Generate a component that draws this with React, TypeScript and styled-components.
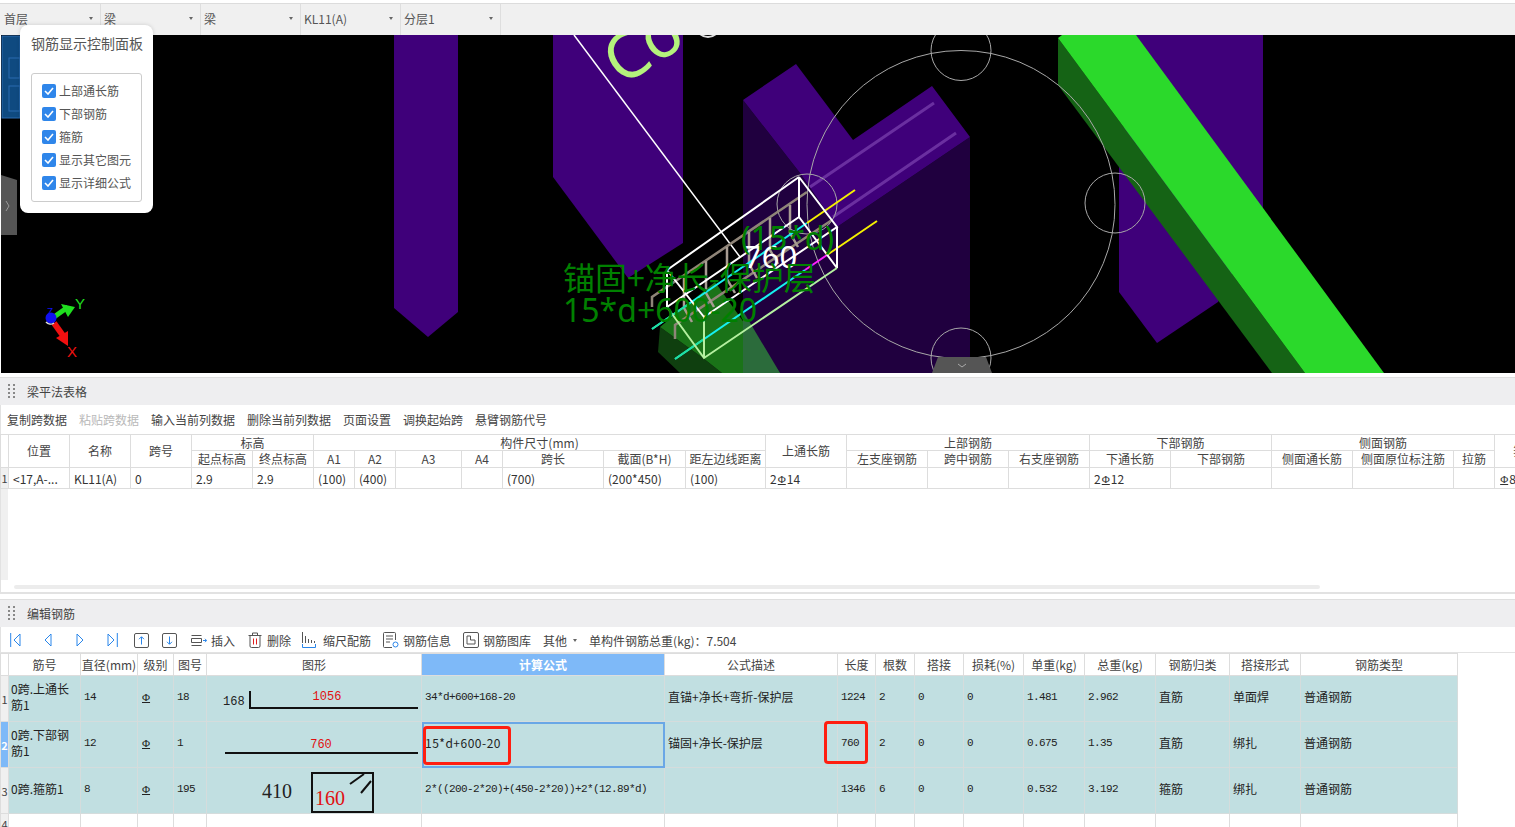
import React from 'react';
import styled, { createGlobalStyle } from 'styled-components';

const Global = createGlobalStyle`
  html, body { margin: 0; padding: 0; background: #fff; overflow: hidden; }
  body { font-family: "Noto Sans CJK SC", "Liberation Sans", sans-serif; font-size: 12px; color: #333; }
  * { box-sizing: border-box; }
`;

const Page = styled.div`
  width: 1515px; height: 827px; overflow: hidden; display: flex; flex-direction: column; background: #fff;
`;
const SelectBar = styled.div`
  margin-top: 3px; height: 32px; flex: none; display: flex; background: #f0f0f0; border-top: 1px solid #dcdcdc; padding-left: 1px;
`;
const SelectBox = styled.div`
  width: 100px; display: flex; align-items: center; justify-content: space-between; padding: 0 7px 2px 3px;
  border-right: 1px solid #dedede; color: #555; font-size: 12px;
`;
const Caret = styled.span`
  width: 0; height: 0; border-left: 2.5px solid transparent; border-right: 2.5px solid transparent; border-top: 3px solid #666;
`;
const Viewport = styled.div`
  position: relative; height: 338px; flex: none; background: #000; margin-left: 1px;
  & > svg { display: block; }
`;
const ControlPanel = styled.div`
  position: absolute; left: 19px; top: -10px; width: 133px; height: 188px; background: #fff; border-radius: 8px; padding: 8px 11px;
  display: flex; flex-direction: column; gap: 20px; box-shadow: 0 0 4px rgba(0,0,0,.15);
`;
const PanelTitle = styled.div`
  font-size: 14px; line-height: 20px; color: #555; white-space: nowrap;
`;
const CheckGroup = styled.div`
  width: 111px; height: 129px; border: 1px solid #ccc; border-radius: 3px; padding: 7px 0 0 10px; display: flex; flex-direction: column; gap: 3px;
`;
const CheckRow = styled.div`
  display: flex; align-items: center; height: 20px; color: #555; font-size: 12px; white-space: nowrap; gap: 3px;
`;
const CheckLabel = styled.span`
  margin-top: -2px;
`;
const CheckMark = styled.span`
  width: 14px; height: 14px; border-radius: 2px; background: #2f86ea; display: flex; align-items: center; justify-content: center; flex: none;
`;
const Gap = styled.div<{ $h: number }>`
  height: ${p => p.$h}px; flex: none;
`;
const Section = styled.section<{ $h: number }>`
  height: ${p => p.$h}px; flex: none; display: flex; flex-direction: column; overflow: hidden; position: relative;
  box-shadow: inset 1px 0 0 #e2e2e2;
`;
const SectionHead = styled.div`
  height: 28px; flex: none; background: #eeeef0; border-top: 1px solid #dfdfdf; display: flex; align-items: center; padding-left: 8px; gap: 12px; font-size: 12px; color: #444;
`;
const Grip = styled.span`
  width: 7px; height: 15px; flex: none;
  background-image: radial-gradient(circle at 1px 1px, #888 1px, transparent 1.2px);
  background-size: 5px 4px;
`;
const TextBar = styled.div`
  height: 29px; flex: none; display: flex; align-items: center; gap: 12px; padding: 0 0 1px 7px; font-size: 12px; color: #444; white-space: nowrap;
`;
const TextAction = styled.span<{ $off?: boolean }>`
  color: ${p => (p.$off ? '#b9b9b9' : '#444')};
`;
const IconBar = styled.div`
  height: 26px; flex: none; display: flex; align-items: center; padding: 1px 0 0 10px; font-size: 12px; color: #444; white-space: nowrap; border-bottom: 1px solid #e2e2e2;
`;
const NavBtn = styled.span<{ $w: number }>`
  width: ${p => p.$w}px; flex: none; display: flex; align-items: center;
`;
const ToolBtn = styled.span<{ $gap: number; $next: number }>`
  display: flex; align-items: center; gap: ${p => p.$gap}px; margin-right: ${p => p.$next}px; flex: none;
`;
const Sheet = styled.table<{ $w: number }>`
  width: ${p => p.$w}px; table-layout: fixed; border-collapse: collapse; flex: none; font-size: 12px; color: #444;
`;
const Col = styled.col<{ $w: number }>`
  width: ${p => p.$w}px;
`;
const Row = styled.tr<{ $h: number }>`
  height: ${p => p.$h}px;
`;
const Head = styled.th<{ $active?: boolean }>`
  font-weight: ${p => (p.$active ? 700 : 400)}; padding: 0; border: 1px solid #dddddd; text-align: center; white-space: nowrap; overflow: hidden; line-height: 14px;
  background: ${p => (p.$active ? '#7eb9f8' : '#fff')}; color: ${p => (p.$active ? '#fff' : '#444')};
`;
const NumCell = styled.td<{ $active?: boolean }>`
  padding: 0; text-align: center; border: 1px solid #dddddd; font-size: 11px; overflow: hidden;
  background: ${p => (p.$active ? '#7eb9f8' : '#f0f0f0')}; color: ${p => (p.$active ? '#fff' : '#444')}; font-weight: ${p => (p.$active ? 700 : 400)};
`;
const PlainCell = styled.td`
  padding: 0 3px 0 4px; border: 1px solid #dddddd; white-space: nowrap; overflow: hidden; color: #333;
`;
const DataCell = styled.td<{ $mono?: boolean; $tight?: boolean; $wrap?: boolean }>`
  position: relative; padding: 0 ${p => (p.$tight ? 0 : 3)}px ${p => (p.$tight ? 0 : 3)}px ${p => (p.$tight ? 0 : p.$wrap ? 2 : 3)}px; border: 1px solid #d5dcdc; background: #c1dfe1; color: #222;
  white-space: ${p => (p.$wrap ? 'normal' : 'nowrap')}; line-height: 16px;
  font-family: ${p => (p.$mono ? '"Liberation Mono", monospace' : 'inherit')};
  font-size: ${p => (p.$mono ? '11px' : '12px')};
  letter-spacing: ${p => (p.$mono ? '-0.6px' : '0')};
`;
const SelectedCell = styled(DataCell)`
  outline: 2px solid #6aa7e6; outline-offset: -2px; font-family: "Noto Sans CJK SC", sans-serif; font-size: 12px; letter-spacing: 0.5px;
`;
const EmptyCell = styled.td`
  border: 1px solid #dddddd; padding: 0;
`;
const RedMark = styled.span<{ $l: number; $t: number; $w: number; $h: number }>`
  position: absolute; left: ${p => p.$l}px; top: ${p => p.$t}px; width: ${p => p.$w}px; height: ${p => p.$h}px;
  border: 3px solid #ff1e10; border-radius: 4px; pointer-events: none;
`;
const Shape = styled.svg`
  display: block; width: 215px; height: 45px;
`;
const BlankBody = styled.div`
  flex: 1; position: relative; border-bottom: 2px solid #e2e2e2;
`;
const NumStrip = styled.div`
  position: absolute; left: 1px; top: 0; bottom: 12px; width: 7px; background: #f0f0f0;
`;
const Scroll = styled.div`
  position: absolute; left: 14px; bottom: 3px; width: 1306px; height: 4px; border-radius: 2px; background: #ececec;
`;
const Rebar = styled.span`
  font-family: "Liberation Serif", serif; font-size: 11px; letter-spacing: 0; text-decoration: underline; margin: 0 1px; position: relative; top: -1px;
`;
const Total = styled.span`
  margin-left: 12px;
`;

const c1 = [8, 61, 61, 61, 61, 61, 41, 41, 66, 41, 101, 82, 80, 81, 81, 81, 81, 81, 101, 81, 101, 41, 61];
const c2 = [8, 72, 57, 36, 33, 215, 243, 173, 38, 39, 49, 60, 61, 71, 74, 71, 157];
const head2 = ['', '筋号', '直径(mm)', '级别', '图号', '图形', '计算公式', '公式描述', '长度', '根数', '搭接', '损耗(%)', '单重(kg)', '总重(kg)', '钢筋归类', '搭接形式', '钢筋类型'];

const Check = () => (
  <CheckMark>
    <svg width="10" height="8" viewBox="0 0 10 8"><path d="M1 4l3 3 5-6" fill="none" stroke="#fff" strokeWidth="1.6" /></svg>
  </CheckMark>
);

const Scene = () => (
  <svg width="1514" height="338" viewBox="1 35 1514 338">
    <polygon points="394,35 458,35 458,312 428,337 394,308" fill="#3f007a" />
    <polygon points="553,35 683,35 683,243 628,278 553,177" fill="#3f007a" />
    <polygon points="743,100 800,173 837,227 970,137 970,373 743,373" fill="#20003f" />
    <polygon points="743,100 796,64 853,140 932,86 970,137 837,227 800,173" fill="#3f007a" />
    <path d="M934 103L810 187M956 133L833 217" stroke="#6a2fa0" strokeWidth="3" fill="none" />
    <polygon points="1136,35 1263,35 1263,210 1218,302 1157,343 1119,292 1119,165" fill="#3f007a" />
    <polygon points="1058,38 1305,373 1272,373 1058,85" fill="#156315" />
    <polygon points="1058,38 1062,35 1136,35 1384,373 1305,373" fill="#2bd92b" />
    <g fill="none" stroke="#a8a8a8" strokeWidth="1">
      <circle cx="961" cy="204.5" r="154" />
      <circle cx="961" cy="50.5" r="30" />
      <circle cx="1115" cy="203" r="30" />
      <circle cx="961" cy="358" r="30" />
      <circle cx="807" cy="204" r="30" />
    </g>
    <circle cx="708" cy="25" r="12" fill="none" stroke="#ddd" strokeWidth="2" />
    <text x="610" y="77" fontSize="64" fill="#b4f27c" fontFamily="Noto Sans" transform="rotate(-33 632 62)">Co</text>
    <path d="M574 35L740 257" stroke="#fff" strokeWidth="1.5" />
    <polygon points="660,327 703,358 722,373 680,373 658,352" fill="#0f3f0f" />
    <polygon points="660,327 715,282 780,373 722,373 703,358" fill="#1a7318" />
    <polygon points="743,311 780,373 743,373" fill="#2b6b3b" />
    <g stroke="#8f8578" strokeWidth="2.5" fill="none">
      <path d="M807 192L652 297v10M832 220L675 325v14" />
    </g>
    <path d="M790 205v28l8 14M770 218v32l8 14M749 232v32l8 14M727 247v32l8 14M706 261v32l8 14M684 276v32l8 14" stroke="#a89c92" strokeWidth="2.5" fill="none" />
    <path d="M652 329L807 223" stroke="#16f0f0" strokeWidth="2" />
    <path d="M807 223L855 190" stroke="#f5f000" strokeWidth="2" />
    <path d="M675 359L805 270" stroke="#16f0f0" strokeWidth="2" />
    <path d="M675 359L704 339" stroke="#20e0a0" strokeWidth="2" />
    <path d="M652 329L690 303" stroke="#20e0a0" strokeWidth="2" />
    <path d="M805 270L827 255" stroke="#ff20ff" strokeWidth="2" />
    <path d="M827 255L877 221" stroke="#f5f000" strokeWidth="2" />
    <g stroke="#fff" strokeWidth="2" fill="none">
      <path d="M799 177L667 270M799 177L837 227L704 317M667 270L704 317M667 270V307M837 227V268M799 217L837 268M799 217L667 307M799 177V217" />
    </g>
    <path d="M667 307L704 358L837 268M704 317V358" stroke="#b5f0a0" strokeWidth="2" fill="none" />
    <text x="744" y="268" fontSize="31" fill="#fff" fontFamily="Noto Sans">760</text>
    <text x="741" y="250" fontSize="32" fill="#008000" fontFamily="Noto Sans">(15*d)</text>
    <text x="563" y="290" fontSize="32" fill="#008000" fontFamily="Noto Sans CJK SC">锚固+净长-保护层</text>
    <text x="563" y="322" fontSize="32" fill="#008000" fontFamily="Noto Sans">15*d+600-20</text>
    <rect x="2" y="36" width="18" height="82" fill="#0f4a80" stroke="#2a6ab0" />
    <rect x="9" y="58" width="11" height="20" fill="none" stroke="#2a6ab0" />
    <rect x="9" y="86" width="11" height="25" fill="none" stroke="#2a6ab0" />
    <path d="M1 175L17 180V235H1Z" fill="#555" />
    <path d="M6 201l3 5-3 5" stroke="#999" fill="none" />
    <path d="M938 357H986L992 373H932Z" fill="#555" />
    <path d="M958 364l4 3 4-3" stroke="#aaa" fill="none" />
    <path d="M54 317L68 307" stroke="#20e020" strokeWidth="5" />
    <polygon points="75,307 61,304 68,317" fill="#20e020" />
    <path d="M54 323L64 337" stroke="#f01010" strokeWidth="6" />
    <polygon points="68,346 56,338 68,331" fill="#f01010" />
    <circle cx="51" cy="318" r="5.5" fill="#1010f0" />
    <path d="M46 322a6 6 0 0 0 8 1" stroke="#ddd" strokeWidth="1.5" fill="none" />
    <text x="75" y="309" fontSize="15" fill="#20e020" fontFamily="Liberation Sans">Y</text>
    <text x="67" y="357" fontSize="15" fill="#f01010" fontFamily="Liberation Sans">X</text>
    <text x="47" y="316" fontSize="10" fill="#1010f0" fontFamily="Liberation Sans">Z</text>
  </svg>
);

const blue = '#2a86ea';
const IcoFirst = () => <svg width="11" height="14" viewBox="0 0 11 14"><path d="M.7 0v14M10 1L4 7l6 6z" fill="none" stroke={blue} /></svg>;
const IcoPrev = () => <svg width="8" height="14" viewBox="0 0 8 14"><path d="M7 1L1 7l6 6z" fill="none" stroke={blue} /></svg>;
const IcoNext = () => <svg width="8" height="14" viewBox="0 0 8 14"><path d="M1 1l6 6-6 6z" fill="none" stroke={blue} /></svg>;
const IcoLast = () => <svg width="11" height="14" viewBox="0 0 11 14"><path d="M10.3 0v14M1 1l6 6-6 6z" fill="none" stroke={blue} /></svg>;
const IcoUp = () => <svg width="15" height="15" viewBox="0 0 15 15"><rect x=".5" y=".5" width="14" height="14" rx="1.5" fill="none" stroke="#555" /><path d="M7.5 11.5V4M5 6.2l2.5-2.5L10 6.2" fill="none" stroke={blue} /></svg>;
const IcoDown = () => <svg width="15" height="15" viewBox="0 0 15 15"><rect x=".5" y=".5" width="14" height="14" rx="1.5" fill="none" stroke="#555" /><path d="M7.5 3.5V11M5 8.8l2.5 2.5L10 8.8" fill="none" stroke={blue} /></svg>;
const IcoInsert = () => <svg width="16" height="11" viewBox="0 0 16 11"><path d="M.5.5h10M.5 10.5h10M.5 3.5h10v4H.5z" fill="none" stroke="#555" /><path d="M12 5.5h3.5M14 3.8l1.6 1.7-1.6 1.7" fill="none" stroke={blue} /></svg>;
const IcoTrash = () => <svg width="14" height="16" viewBox="0 0 14 16"><path d="M.5 3.5h13M4.5 3.5V1h5v2.5M2 3.5v10.5a1.5 1.5 0 0 0 1.5 1.5h7a1.5 1.5 0 0 0 1.5-1.5V3.5" fill="none" stroke="#555" /><path d="M5.5 6.5v6M8.5 6.5v6" stroke="#e02020" /></svg>;
const IcoScale = () => <svg width="14" height="16" viewBox="0 0 14 16"><path d="M.5 0v11M3.5 4v7M6.5 7v4M9.5 8v3M12.5 9v2" stroke="#555" fill="none" /><path d="M.5 12v3.5h13V12" stroke={blue} fill="none" /></svg>;
const IcoInfo = () => <svg width="16" height="16" viewBox="0 0 16 16"><path d="M9 15.5H1.5a1 1 0 0 1-1-1V1.5a1 1 0 0 1 1-1h10a1 1 0 0 1 1 1V8" fill="none" stroke="#555" /><path d="M3 4h7M3 7h7M3 10h4" stroke="#555" /><circle cx="12.5" cy="12.5" r="2.5" fill="none" stroke={blue} /></svg>;
const IcoLib = () => <svg width="16" height="16" viewBox="0 0 16 16"><rect x=".5" y=".5" width="15" height="15" rx="1.5" fill="none" stroke="#555" /><path d="M4 12V4h3.5v4H12v4z" fill="none" stroke="#555" /></svg>;

const Bar = () => <Rebar>Φ</Rebar>;

const rows2 = [
  { n: '1', name: '0跨.上通长筋1', d: '14', t: '18', desc: '直锚+净长+弯折-保护层', len: '1224', cnt: '2', w1: '1.481', w2: '2.962', cat: '直筋', lap: '单面焊' },
  { n: '2', name: '0跨.下部钢筋1', d: '12', t: '1', desc: '锚固+净长-保护层', len: '760', cnt: '2', w1: '0.675', w2: '1.35', cat: '直筋', lap: '绑扎' },
  { n: '3', name: '0跨.箍筋1', d: '8', t: '195', desc: '', len: '1346', cnt: '6', w1: '0.532', w2: '3.192', cat: '箍筋', lap: '绑扎' },
];

const shapes = [
  <Shape viewBox="0 0 215 45" key="a">
    <text x="16" y="29" fontSize="12" fontFamily="Liberation Mono" fill="#222">168</text>
    <path d="M43 15v17h168" fill="none" stroke="#111" strokeWidth="2" />
    <text x="120" y="24" textAnchor="middle" fontSize="12" fontFamily="Liberation Mono" fill="#e01010">1056</text>
  </Shape>,
  <Shape viewBox="0 0 215 45" key="b">
    <path d="M18 31h193" stroke="#111" strokeWidth="2" />
    <text x="114" y="26" textAnchor="middle" fontSize="12" fontFamily="Liberation Mono" fill="#e01010">760</text>
  </Shape>,
  <Shape viewBox="0 0 215 45" key="c">
    <text x="55" y="30" fontSize="20" fontFamily="Liberation Serif" fill="#222">410</text>
    <rect x="105" y="5" width="61" height="39" fill="none" stroke="#111" strokeWidth="2" />
    <path d="M143 16l14-10M154 25l10-12" stroke="#111" strokeWidth="2" />
    <text x="108" y="37" fontSize="20" fontFamily="Liberation Serif" fill="#e01010">160</text>
  </Shape>,
];

const formulas = ['34*d+600+168-20', '15*d+600-20', '2*((200-2*20)+(450-2*20))+2*(12.89*d)'];

export default function App() {
  return (
    <Page>
      <Global />
      <SelectBar>
        {['首层', '梁', '梁', 'KL11(A)', '分层1'].map((t, i) => (
          <SelectBox key={i}>{t}<Caret /></SelectBox>
        ))}
      </SelectBar>
      <Viewport>
        <Scene />
        <ControlPanel>
          <PanelTitle>钢筋显示控制面板</PanelTitle>
          <CheckGroup>
            {['上部通长筋', '下部钢筋', '箍筋', '显示其它图元', '显示详细公式'].map(t => (
              <CheckRow key={t}><Check /><CheckLabel>{t}</CheckLabel></CheckRow>
            ))}
          </CheckGroup>
        </ControlPanel>
      </Viewport>
      <Gap $h={4} />
      <Section $h={217}>
        <SectionHead><Grip />梁平法表格</SectionHead>
        <TextBar>
          <TextAction>复制跨数据</TextAction>
          <TextAction $off>粘贴跨数据</TextAction>
          <TextAction>输入当前列数据</TextAction>
          <TextAction>删除当前列数据</TextAction>
          <TextAction>页面设置</TextAction>
          <TextAction>调换起始跨</TextAction>
          <TextAction>悬臂钢筋代号</TextAction>
        </TextBar>
        <Sheet $w={1555}>
          <colgroup>{c1.map((w, i) => <Col key={i} $w={w} />)}</colgroup>
          <tbody>
            <Row $h={16}>
              <Head rowSpan={2} />
              <Head rowSpan={2}>位置</Head>
              <Head rowSpan={2}>名称</Head>
              <Head rowSpan={2}>跨号</Head>
              <Head colSpan={2}>标高</Head>
              <Head colSpan={7}>构件尺寸(mm)</Head>
              <Head rowSpan={2}>上通长筋</Head>
              <Head colSpan={3}>上部钢筋</Head>
              <Head colSpan={2}>下部钢筋</Head>
              <Head colSpan={3}>侧面钢筋</Head>
              <Head rowSpan={2}>箍筋</Head>
            </Row>
            <Row $h={17}>
              {['起点标高', '终点标高', 'A1', 'A2', 'A3', 'A4', '跨长', '截面(B*H)', '距左边线距离', '左支座钢筋', '跨中钢筋', '右支座钢筋', '下通长筋', '下部钢筋', '侧面通长筋', '侧面原位标注筋', '拉筋'].map(t => (
                <Head key={t}>{t}</Head>
              ))}
            </Row>
            <Row $h={21}>
              <NumCell>1</NumCell>
              <PlainCell>&lt;17,A-...</PlainCell>
              <PlainCell>KL11(A)</PlainCell>
              <PlainCell>0</PlainCell>
              <PlainCell>2.9</PlainCell>
              <PlainCell>2.9</PlainCell>
              <PlainCell>(100)</PlainCell>
              <PlainCell>(400)</PlainCell>
              <PlainCell />
              <PlainCell />
              <PlainCell>(700)</PlainCell>
              <PlainCell>(200*450)</PlainCell>
              <PlainCell>(100)</PlainCell>
              <PlainCell>2<Bar />14</PlainCell>
              <PlainCell /><PlainCell /><PlainCell />
              <PlainCell>2<Bar />12</PlainCell>
              <PlainCell /><PlainCell /><PlainCell /><PlainCell />
              <PlainCell><Bar />8@100</PlainCell>
            </Row>
          </tbody>
        </Sheet>
        <BlankBody><NumStrip /><Scroll /></BlankBody>
      </Section>
      <Gap $h={5} />
      <Section $h={228}>
        <SectionHead><Grip />编辑钢筋</SectionHead>
        <IconBar>
          <NavBtn $w={34}><IcoFirst /></NavBtn>
          <NavBtn $w={32}><IcoPrev /></NavBtn>
          <NavBtn $w={31}><IcoNext /></NavBtn>
          <NavBtn $w={27}><IcoLast /></NavBtn>
          <NavBtn $w={28}><IcoUp /></NavBtn>
          <NavBtn $w={29}><IcoDown /></NavBtn>
          <ToolBtn $gap={4} $next={13}><IcoInsert />插入</ToolBtn>
          <ToolBtn $gap={5} $next={11}><IcoTrash />删除</ToolBtn>
          <ToolBtn $gap={7} $next={12}><IcoScale />缩尺配筋</ToolBtn>
          <ToolBtn $gap={4} $next={12}><IcoInfo />钢筋信息</ToolBtn>
          <ToolBtn $gap={4} $next={12}><IcoLib />钢筋图库</ToolBtn>
          <ToolBtn $gap={6} $next={0}>其他<Caret /></ToolBtn>
          <Total>单构件钢筋总重(kg)：7.504</Total>
        </IconBar>
        <Sheet $w={1457}>
          <colgroup>{c2.map((w, i) => <Col key={i} $w={w} />)}</colgroup>
          <tbody>
            <Row $h={22}>
              {head2.map((t, i) => <Head key={i} $active={i === 6}>{t}</Head>)}
            </Row>
            {rows2.map((r, i) => (
              <Row $h={46} key={r.n}>
                <NumCell $active={i === 1}>{r.n}</NumCell>
                <DataCell $wrap>{r.name}</DataCell>
                <DataCell $mono>{r.d}</DataCell>
                <DataCell><Bar /></DataCell>
                <DataCell $mono>{r.t}</DataCell>
                <DataCell $tight>{shapes[i]}</DataCell>
                {i === 1 ? (
                  <SelectedCell>{formulas[i]}<RedMark $l={1} $t={4} $w={88} $h={39} /></SelectedCell>
                ) : (
                  <DataCell $mono>{formulas[i]}</DataCell>
                )}
                <DataCell>{r.desc}</DataCell>
                <DataCell $mono>{r.len}{i === 1 && <RedMark $l={-14} $t={-1} $w={44} $h={43} />}</DataCell>
                <DataCell $mono>{r.cnt}</DataCell>
                <DataCell $mono>0</DataCell>
                <DataCell $mono>0</DataCell>
                <DataCell $mono>{r.w1}</DataCell>
                <DataCell $mono>{r.w2}</DataCell>
                <DataCell>{r.cat}</DataCell>
                <DataCell>{r.lap}</DataCell>
                <DataCell>普通钢筋</DataCell>
              </Row>
            ))}
            <Row $h={20}>
              <NumCell>4</NumCell>
              {c2.slice(1).map((_, i) => <EmptyCell key={i} />)}
            </Row>
          </tbody>
        </Sheet>
      </Section>
    </Page>
  );
}
